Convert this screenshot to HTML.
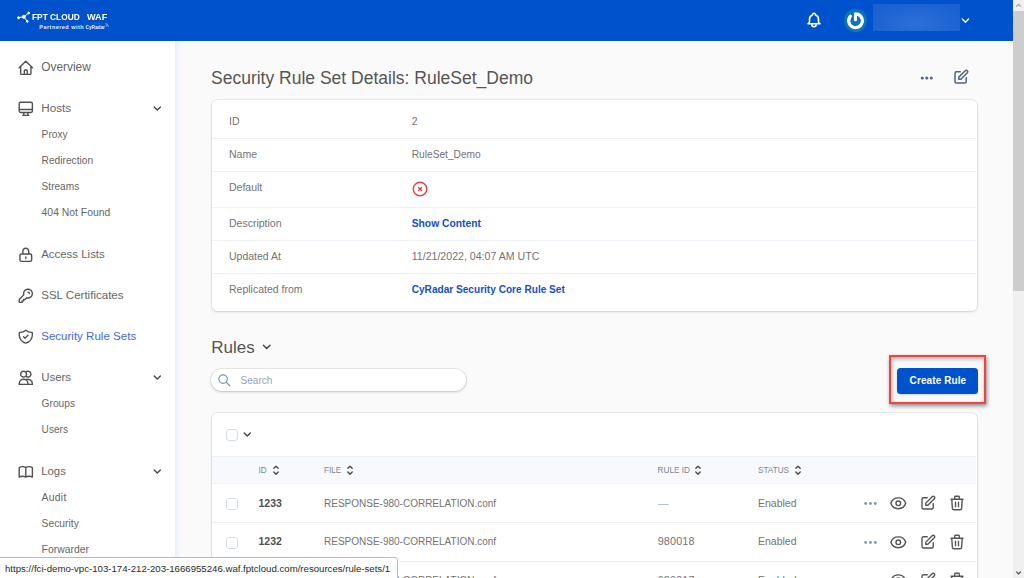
<!DOCTYPE html>
<html lang="en"><head><meta charset="utf-8"><title>Security Rule Set Details: RuleSet_Demo</title>
<style>
html,body{margin:0;padding:0}
body{width:1024px;height:578px;overflow:hidden;position:relative;background:#fafafa;font-family:"Liberation Sans", sans-serif}
.t{position:absolute;white-space:pre;line-height:normal}
.i,.b{position:absolute;display:block}
</style></head><body>
<div class="b" style="left:0px;top:0px;width:1013px;height:41px;background:#0052cc"></div>
<svg class="i" style="left:17px;top:11px" width="14" height="13" viewBox="0 0 14 13"><g stroke="#fff" stroke-width="1" fill="#fff"><path d="M1.6 6.7L6.8 5.8M6.8 5.8L11.7 2M6.8 5.8L10.3 10.3" fill="none"/><circle cx="1.6" cy="6.7" r="1.05"/><circle cx="6.8" cy="5.8" r="1.5"/><circle cx="11.7" cy="2" r="0.9"/><circle cx="10.3" cy="10.4" r="0.9"/></g></svg>
<span class="t" style="left:31.5px;top:11.00px;font-size:9.6px;color:#fff;font-weight:700;transform:scaleX(0.87);transform-origin:0 0">FPT CLOUD</span>
<span class="t" style="left:86.8px;top:11.00px;font-size:9.6px;color:#fff;font-weight:700;transform:scaleX(0.95);transform-origin:0 0">WAF</span>
<span class="t" style="left:39.3px;top:24.00px;font-size:5.5px;color:#e8eefc;font-weight:700;letter-spacing:0.47px">Partnered with</span>
<span class="t" style="left:85.6px;top:25.00px;font-size:4.7px;color:#e8eefc;font-weight:700;">CyRadar</span>
<svg class="i" style="left:104.5px;top:23px" width="4" height="5" viewBox="0 0 4 5" fill="none" stroke="#dfe8fb" stroke-width="0.6"><path d="M0.5 0.6A3 3 0 0 1 3.4 3.6M0.5 2A1.6 1.6 0 0 1 2 3.6"/></svg>
<svg class="i" style="left:805.2px;top:10.8px;" width="18" height="18" viewBox="0 0 24 24" fill="none" stroke="#fff" stroke-width="2.1" stroke-linecap="round" stroke-linejoin="round"><path d="M15 17h5l-1.405-1.405A2.032 2.032 0 0118 14.158V11a6.002 6.002 0 00-4-5.659V5a2 2 0 10-4 0v.341C7.67 6.165 6 8.388 6 11v3.159c0 .538-.214 1.055-.595 1.436L4 17h5m6 0v1a3 3 0 11-6 0v-1m6 0H9"/></svg>
<div class="b" style="left:843.8px;top:8.9px;width:23.1px;height:23.1px;border-radius:50%;background:#0d75b8"></div>
<svg class="i" style="left:843.8px;top:8.9px" width="23.1" height="23.1" viewBox="0 0 23.1 23.1" fill="none" stroke="#fff" stroke-width="3.1" stroke-linecap="round" stroke-linejoin="round"><path d="M11.5 10.8V4.9A6.85 6.85 0 1 1 6.5 7.1"/></svg>
<div class="b" style="left:873px;top:4.2px;width:87px;height:26.6px;background:radial-gradient(ellipse at 50% 75%,#2c70d8 0%,#1d63d2 70%,#195fd0 100%);filter:blur(0.7px)"></div>
<svg class="i" style="left:960.2px;top:15.2px;" width="10.8" height="10.8" viewBox="0 0 24 24" fill="none" stroke="#fff" stroke-width="3" stroke-linecap="round" stroke-linejoin="round"><path d="M19 9l-7 7-7-7"/></svg>
<div class="b" style="left:0px;top:41px;width:175px;height:537px;background:#fff"></div>
<div class="b" style="left:175px;top:41px;width:7px;height:537px;background:linear-gradient(90deg,#e7eefb 0%,#eff4fb 30%,#f6f8fb 60%,#fafafa 100%)"></div>
<svg class="i" style="left:17.4px;top:59.300000000000004px;" width="17.6" height="17.6" viewBox="0 0 24 24" fill="none" stroke="#505050" stroke-width="1.9" stroke-linecap="round" stroke-linejoin="round"><path d="M3 12l2-2m0 0l7-7 7 7M5 10v10a1 1 0 001 1h3m10-11l2 2m-2-2v10a1 1 0 01-1 1h-3m-6 0a1 1 0 001-1v-4a1 1 0 011-1h2a1 1 0 011 1v4a1 1 0 001 1m-6 0h6"/></svg>
<span class="t" style="left:41.2px;top:60.00px;font-size:11.9px;color:#666;font-weight:400;">Overview</span>
<svg class="i" style="left:17.4px;top:99.9px;" width="17.6" height="17.6" viewBox="0 0 24 24" fill="none" stroke="#505050" stroke-width="1.9" stroke-linecap="round" stroke-linejoin="round"><path d="M9.75 17L9 20l-1 1h8l-1-1-.75-3M3 13h18M5 17h14a2 2 0 002-2V5a2 2 0 00-2-2H5a2 2 0 00-2 2v10a2 2 0 002 2z"/></svg>
<span class="t" style="left:41.2px;top:101.00px;font-size:11.7px;color:#666;font-weight:400;">Hosts</span>
<svg class="i" style="left:152px;top:102.7px;" width="10.6" height="10.6" viewBox="0 0 24 24" fill="none" stroke="#444" stroke-width="3" stroke-linecap="round" stroke-linejoin="round"><path d="M19 9l-7 7-7-7"/></svg>
<span class="t" style="left:41.6px;top:129.00px;font-size:10.2px;color:#666;font-weight:400;">Proxy</span>
<span class="t" style="left:41.6px;top:155.00px;font-size:10.2px;color:#666;font-weight:400;">Redirection</span>
<span class="t" style="left:41.6px;top:181.00px;font-size:10.1px;color:#666;font-weight:400;">Streams</span>
<span class="t" style="left:41.6px;top:207.00px;font-size:10.4px;color:#666;font-weight:400;">404 Not Found</span>
<svg class="i" style="left:17.4px;top:245.9px;" width="17.6" height="17.6" viewBox="0 0 24 24" fill="none" stroke="#505050" stroke-width="1.9" stroke-linecap="round" stroke-linejoin="round"><path d="M12 15v2m-6 4h12a2 2 0 002-2v-6a2 2 0 00-2-2H6a2 2 0 00-2 2v6a2 2 0 002 2zm10-10V7a4 4 0 00-8 0v4h8z"/></svg>
<span class="t" style="left:41.2px;top:248.00px;font-size:11.45px;color:#666;font-weight:400;">Access Lists</span>
<svg class="i" style="left:17.4px;top:286.9px;" width="17.6" height="17.6" viewBox="0 0 24 24" fill="none" stroke="#505050" stroke-width="1.9" stroke-linecap="round" stroke-linejoin="round"><path d="M15 7a2 2 0 012 2m4 0a6 6 0 01-7.743 5.743L11 17H9v2H7v2H4a1 1 0 01-1-1v-2.586a1 1 0 01.293-.707l5.964-5.964A6 6 0 1121 9z"/></svg>
<span class="t" style="left:41.2px;top:289.00px;font-size:11.55px;color:#666;font-weight:400;">SSL Certificates</span>
<svg class="i" style="left:17.4px;top:327.9px;" width="17.6" height="17.6" viewBox="0 0 24 24" fill="none" stroke="#505050" stroke-width="1.9" stroke-linecap="round" stroke-linejoin="round"><path d="M9 12l2 2 4-4m5.618-4.016A11.955 11.955 0 0112 2.944a11.955 11.955 0 01-8.618 3.04A12.02 12.02 0 003 9c0 5.591 3.824 10.29 9 11.622 5.176-1.332 9-6.03 9-11.622 0-1.042-.133-2.052-.382-3.016z"/></svg>
<span class="t" style="left:41.2px;top:330.00px;font-size:11.56px;color:#4569da;font-weight:400;">Security Rule Sets</span>
<svg class="i" style="left:17.4px;top:368.9px;" width="17.6" height="17.6" viewBox="0 0 24 24" fill="none" stroke="#505050" stroke-width="1.9" stroke-linecap="round" stroke-linejoin="round"><path d="M12 4.354a4 4 0 110 5.292M15 21H3v-1a6 6 0 0112 0v1zm0 0h6v-1a6 6 0 00-9-5.197M13 7a4 4 0 11-8 0 4 4 0 018 0z"/></svg>
<span class="t" style="left:41.2px;top:371.00px;font-size:11.45px;color:#666;font-weight:400;">Users</span>
<svg class="i" style="left:152px;top:371.7px;" width="10.6" height="10.6" viewBox="0 0 24 24" fill="none" stroke="#444" stroke-width="3" stroke-linecap="round" stroke-linejoin="round"><path d="M19 9l-7 7-7-7"/></svg>
<span class="t" style="left:41.6px;top:398.00px;font-size:10.2px;color:#666;font-weight:400;">Groups</span>
<span class="t" style="left:41.6px;top:424.00px;font-size:10.1px;color:#666;font-weight:400;">Users</span>
<svg class="i" style="left:17.4px;top:462.9px;" width="17.6" height="17.6" viewBox="0 0 24 24" fill="none" stroke="#505050" stroke-width="1.9" stroke-linecap="round" stroke-linejoin="round"><path d="M12 6.253v13m0-13C10.832 5.477 9.246 5 7.5 5S4.168 5.477 3 6.253v13C4.168 18.477 5.754 18 7.5 18s3.332.477 4.5 1.253m0-13C13.168 5.477 14.754 5 16.5 5c1.747 0 3.332.477 4.5 1.253v13C19.832 18.477 18.247 18 16.5 18c-1.746 0-3.332.477-4.5 1.253"/></svg>
<span class="t" style="left:41.2px;top:465.00px;font-size:11.4px;color:#666;font-weight:400;">Logs</span>
<svg class="i" style="left:152px;top:465.7px;" width="10.6" height="10.6" viewBox="0 0 24 24" fill="none" stroke="#444" stroke-width="3" stroke-linecap="round" stroke-linejoin="round"><path d="M19 9l-7 7-7-7"/></svg>
<span class="t" style="left:41.6px;top:492.00px;font-size:10.4px;color:#666;font-weight:400;letter-spacing:0.25px">Audit</span>
<span class="t" style="left:41.6px;top:518.00px;font-size:10.3px;color:#666;font-weight:400;">Security</span>
<span class="t" style="left:41.6px;top:544.00px;font-size:10.4px;color:#666;font-weight:400;">Forwarder</span>
<span class="t" style="left:211px;top:68.00px;font-size:17.5px;color:#555;font-weight:400;">Security Rule Set Details: RuleSet_Demo</span>
<svg class="i" style="left:920px;top:74.6px" width="14" height="6" viewBox="0 0 14 6" fill="#56688a"><circle cx="2.3" cy="3" r="1.55"/><circle cx="6.8" cy="3" r="1.55"/><circle cx="11.3" cy="3" r="1.55"/></svg>
<svg class="i" style="left:951.5px;top:68.1px;" width="18" height="18" viewBox="0 0 24 24" fill="none" stroke="#53627d" stroke-width="2" stroke-linecap="round" stroke-linejoin="round"><path d="M11 5H6a2 2 0 00-2 2v11a2 2 0 002 2h11a2 2 0 002-2v-5m-1.414-9.414a2 2 0 112.828 2.828L11.828 15H9v-2.828l8.586-8.586z"/></svg>
<div class="b" style="left:211.7px;top:100.2px;width:765.3px;height:211.2px;background:#fff;border-radius:5.5px;box-shadow:0 0 0 1px rgba(0,0,0,0.055),0 1px 3px rgba(0,0,0,0.12)"></div>
<div class="b" style="left:212px;top:138px;width:764px;height:1px;background:#eef2f7"></div>
<div class="b" style="left:212px;top:171px;width:764px;height:1px;background:#eef2f7"></div>
<div class="b" style="left:212px;top:207px;width:764px;height:1px;background:#eef2f7"></div>
<div class="b" style="left:212px;top:240px;width:764px;height:1px;background:#eef2f7"></div>
<div class="b" style="left:212px;top:273px;width:764px;height:1px;background:#eef2f7"></div>
<span class="t" style="left:229px;top:115.00px;font-size:10.5px;color:#737373;font-weight:400;">ID</span>
<span class="t" style="left:411.7px;top:115.00px;font-size:10.5px;color:#737373;font-weight:400;">2</span>
<span class="t" style="left:229px;top:148.00px;font-size:10.5px;color:#737373;font-weight:400;">Name</span>
<span class="t" style="left:411.7px;top:149.00px;font-size:10.2px;color:#737373;font-weight:400;">RuleSet_Demo</span>
<span class="t" style="left:229px;top:181.00px;font-size:10.5px;color:#737373;font-weight:400;">Default</span>
<svg class="i" style="left:411.1px;top:180.2px;" width="18.1" height="18.1" viewBox="0 0 24 24" fill="none" stroke="#e63d44" stroke-width="1.85" stroke-linecap="round" stroke-linejoin="round"><path d="M10 14l2-2m0 0l2-2m-2 2l-2-2m2 2l2 2m7-2a9 9 0 11-18 0 9 9 0 0118 0z"/></svg>
<span class="t" style="left:229px;top:217.00px;font-size:10.5px;color:#737373;font-weight:400;">Description</span>
<span class="t" style="left:411.7px;top:218.00px;font-size:10.3px;color:#1350cf;font-weight:700;">Show Content</span>
<span class="t" style="left:229px;top:250.00px;font-size:10.5px;color:#737373;font-weight:400;">Updated At</span>
<span class="t" style="left:411.7px;top:250.00px;font-size:10.6px;color:#737373;font-weight:400;">11/21/2022, 04:07 AM UTC</span>
<span class="t" style="left:229px;top:283.00px;font-size:10.5px;color:#737373;font-weight:400;">Replicated from</span>
<span class="t" style="left:411.7px;top:284.00px;font-size:10.1px;color:#1350cf;font-weight:700;">CyRadar Security Core Rule Set</span>
<span class="t" style="left:211.2px;top:338.00px;font-size:17px;color:#555;font-weight:400;">Rules</span>
<svg class="i" style="left:261.3px;top:341px;" width="11.4" height="11.4" viewBox="0 0 24 24" fill="none" stroke="#444" stroke-width="3" stroke-linecap="round" stroke-linejoin="round"><path d="M19 9l-7 7-7-7"/></svg>
<div class="b" style="left:211.4px;top:368.6px;width:254.8px;height:22.6px;background:#fff;border-radius:12px;box-shadow:0 0 0 1px rgba(0,0,0,0.06),0 1px 3px rgba(0,0,0,0.18)"></div>
<svg class="i" style="left:216.8px;top:372.8px;" width="14.6" height="14.6" viewBox="0 0 24 24" fill="none" stroke="#7b90b2" stroke-width="2" stroke-linecap="round" stroke-linejoin="round"><path d="M21 21l-6-6m2-5a7 7 0 11-14 0 7 7 0 0114 0z"/></svg>
<span class="t" style="left:240.6px;top:375.00px;font-size:10px;color:#93a2bd;font-weight:400;">Search</span>
<div class="b" style="left:897px;top:368px;width:81px;height:26.3px;background:#0052cc;border-radius:3.5px;box-shadow:0 1px 2px rgba(0,0,0,0.15)"></div>
<span class="t" style="left:909.6px;top:375.00px;font-size:10px;color:#fff;font-weight:700;letter-spacing:0.1px">Create Rule</span>
<div class="b" style="left:889px;top:355px;width:93px;height:45px;border:2px solid #f04343;box-shadow:1px 2px 4px rgba(0,0,0,0.45), inset 1px 2px 4px rgba(0,0,0,0.3)"></div>
<div class="b" style="left:211.7px;top:413.2px;width:765.3px;height:200px;background:#fff;border-radius:5.5px;box-shadow:0 0 0 1px rgba(0,0,0,0.055),0 1px 3px rgba(0,0,0,0.12)"></div>
<div class="b" style="left:226px;top:428.7px;width:12px;height:12px;background:#fff;border:1px solid #d4deea;border-radius:3px;box-sizing:border-box"></div>
<svg class="i" style="left:242px;top:429px;" width="10.5" height="10.5" viewBox="0 0 24 24" fill="none" stroke="#444" stroke-width="3.2" stroke-linecap="round" stroke-linejoin="round"><path d="M19 9l-7 7-7-7"/></svg>
<div class="b" style="left:212px;top:456px;width:764px;height:28px;background:#f7f9fc;border-top:1px solid #ebf0f6;border-bottom:1px solid #eef2f7;box-sizing:border-box"></div>
<span class="t" style="left:258.5px;top:466.00px;font-size:8.2px;color:#7a8596;font-weight:400;">ID</span>
<svg class="i" style="left:269.4px;top:463.2px;" width="14" height="14" viewBox="0 0 24 24" fill="none" stroke="#4a4a4a" stroke-width="2.4" stroke-linecap="round" stroke-linejoin="round"><path d="M8.3 9.2l3.7-3.7 3.7 3.7m0 6.2l-3.7 3.7-3.7-3.7"/></svg>
<span class="t" style="left:324px;top:466.00px;font-size:8.2px;color:#7a8596;font-weight:400;">FILE</span>
<svg class="i" style="left:342.59999999999997px;top:463.2px;" width="14" height="14" viewBox="0 0 24 24" fill="none" stroke="#4a4a4a" stroke-width="2.4" stroke-linecap="round" stroke-linejoin="round"><path d="M8.3 9.2l3.7-3.7 3.7 3.7m0 6.2l-3.7 3.7-3.7-3.7"/></svg>
<span class="t" style="left:657.6px;top:466.00px;font-size:8.2px;color:#7a8596;font-weight:400;">RULE ID</span>
<svg class="i" style="left:691.3px;top:463.2px;" width="14" height="14" viewBox="0 0 24 24" fill="none" stroke="#4a4a4a" stroke-width="2.4" stroke-linecap="round" stroke-linejoin="round"><path d="M8.3 9.2l3.7-3.7 3.7 3.7m0 6.2l-3.7 3.7-3.7-3.7"/></svg>
<span class="t" style="left:758px;top:466.00px;font-size:8.2px;color:#7a8596;font-weight:400;">STATUS</span>
<svg class="i" style="left:791.1999999999999px;top:463.2px;" width="14" height="14" viewBox="0 0 24 24" fill="none" stroke="#4a4a4a" stroke-width="2.4" stroke-linecap="round" stroke-linejoin="round"><path d="M8.3 9.2l3.7-3.7 3.7 3.7m0 6.2l-3.7 3.7-3.7-3.7"/></svg>
<div class="b" style="left:226px;top:498.0px;width:12px;height:12px;background:#fff;border:1px solid #d4deea;border-radius:3px;box-sizing:border-box"></div>
<span class="t" style="left:258.5px;top:497.00px;font-size:10.5px;color:#4f4f4f;font-weight:700;">1233</span>
<span class="t" style="left:324px;top:498.00px;font-size:10px;color:#737373;font-weight:400;">RESPONSE-980-CORRELATION.conf</span>
<span class="t" style="left:657.7px;top:497.00px;font-size:10.8px;color:#a8b2c0;font-weight:400;letter-spacing:0.15px">—</span>
<span class="t" style="left:758px;top:497.00px;font-size:10.5px;color:#737373;font-weight:400;">Enabled</span>
<svg class="i" style="left:864px;top:500.9px" width="13" height="5" viewBox="0 0 13 5" fill="#7d98b8"><circle cx="1.7" cy="2.5" r="1.45"/><circle cx="6.5" cy="2.5" r="1.45"/><circle cx="11.3" cy="2.5" r="1.45"/></svg>
<svg class="i" style="left:889px;top:493.8px;" width="18.6" height="18.6" viewBox="0 0 24 24" fill="none" stroke="#555" stroke-width="1.85" stroke-linecap="round" stroke-linejoin="round"><path d="M15 12a3 3 0 11-6 0 3 3 0 016 0z M2.458 12C3.732 7.943 7.523 5 12 5c4.478 0 8.268 2.943 9.542 7-1.274 4.057-5.064 7-9.542 7-4.477 0-8.268-2.943-9.542-7z"/></svg>
<svg class="i" style="left:918.5px;top:494.0px;" width="18" height="18" viewBox="0 0 24 24" fill="none" stroke="#555" stroke-width="1.85" stroke-linecap="round" stroke-linejoin="round"><path d="M11 5H6a2 2 0 00-2 2v11a2 2 0 002 2h11a2 2 0 002-2v-5m-1.414-9.414a2 2 0 112.828 2.828L11.828 15H9v-2.828l8.586-8.586z"/></svg>
<svg class="i" style="left:947.6px;top:493.8px;" width="18" height="18" viewBox="0 0 24 24" fill="none" stroke="#555" stroke-width="1.85" stroke-linecap="round" stroke-linejoin="round"><path d="M19 7l-.867 12.142A2 2 0 0116.138 21H7.862a2 2 0 01-1.995-1.858L5 7m5 4v6m4-6v6m1-10V4a1 1 0 00-1-1h-4a1 1 0 00-1 1v3M4 7h16"/></svg>
<div class="b" style="left:212px;top:522px;width:764px;height:1px;background:#eef2f7"></div>
<div class="b" style="left:226px;top:536.7px;width:12px;height:12px;background:#fff;border:1px solid #d4deea;border-radius:3px;box-sizing:border-box"></div>
<span class="t" style="left:258.5px;top:535.00px;font-size:10.5px;color:#4f4f4f;font-weight:700;">1232</span>
<span class="t" style="left:324px;top:536.00px;font-size:10px;color:#737373;font-weight:400;">RESPONSE-980-CORRELATION.conf</span>
<span class="t" style="left:657.7px;top:535.00px;font-size:10.8px;color:#737373;font-weight:400;letter-spacing:0.15px">980018</span>
<span class="t" style="left:758px;top:535.00px;font-size:10.5px;color:#737373;font-weight:400;">Enabled</span>
<svg class="i" style="left:864px;top:539.6px" width="13" height="5" viewBox="0 0 13 5" fill="#7d98b8"><circle cx="1.7" cy="2.5" r="1.45"/><circle cx="6.5" cy="2.5" r="1.45"/><circle cx="11.3" cy="2.5" r="1.45"/></svg>
<svg class="i" style="left:889px;top:532.5px;" width="18.6" height="18.6" viewBox="0 0 24 24" fill="none" stroke="#555" stroke-width="1.85" stroke-linecap="round" stroke-linejoin="round"><path d="M15 12a3 3 0 11-6 0 3 3 0 016 0z M2.458 12C3.732 7.943 7.523 5 12 5c4.478 0 8.268 2.943 9.542 7-1.274 4.057-5.064 7-9.542 7-4.477 0-8.268-2.943-9.542-7z"/></svg>
<svg class="i" style="left:918.5px;top:532.7px;" width="18" height="18" viewBox="0 0 24 24" fill="none" stroke="#555" stroke-width="1.85" stroke-linecap="round" stroke-linejoin="round"><path d="M11 5H6a2 2 0 00-2 2v11a2 2 0 002 2h11a2 2 0 002-2v-5m-1.414-9.414a2 2 0 112.828 2.828L11.828 15H9v-2.828l8.586-8.586z"/></svg>
<svg class="i" style="left:947.6px;top:532.5px;" width="18" height="18" viewBox="0 0 24 24" fill="none" stroke="#555" stroke-width="1.85" stroke-linecap="round" stroke-linejoin="round"><path d="M19 7l-.867 12.142A2 2 0 0116.138 21H7.862a2 2 0 01-1.995-1.858L5 7m5 4v6m4-6v6m1-10V4a1 1 0 00-1-1h-4a1 1 0 00-1 1v3M4 7h16"/></svg>
<div class="b" style="left:212px;top:561px;width:764px;height:1px;background:#eef2f7"></div>
<div class="b" style="left:226px;top:575.4px;width:12px;height:12px;background:#fff;border:1px solid #d4deea;border-radius:3px;box-sizing:border-box"></div>
<span class="t" style="left:258.5px;top:574.00px;font-size:10.5px;color:#4f4f4f;font-weight:700;">1231</span>
<span class="t" style="left:324px;top:575.00px;font-size:10px;color:#737373;font-weight:400;">RESPONSE-980-CORRELATION.conf</span>
<span class="t" style="left:657.7px;top:574.00px;font-size:10.8px;color:#737373;font-weight:400;letter-spacing:0.15px">980017</span>
<span class="t" style="left:758px;top:574.00px;font-size:10.5px;color:#737373;font-weight:400;">Enabled</span>
<svg class="i" style="left:864px;top:578.3px" width="13" height="5" viewBox="0 0 13 5" fill="#7d98b8"><circle cx="1.7" cy="2.5" r="1.45"/><circle cx="6.5" cy="2.5" r="1.45"/><circle cx="11.3" cy="2.5" r="1.45"/></svg>
<svg class="i" style="left:889px;top:571.2px;" width="18.6" height="18.6" viewBox="0 0 24 24" fill="none" stroke="#555" stroke-width="1.85" stroke-linecap="round" stroke-linejoin="round"><path d="M15 12a3 3 0 11-6 0 3 3 0 016 0z M2.458 12C3.732 7.943 7.523 5 12 5c4.478 0 8.268 2.943 9.542 7-1.274 4.057-5.064 7-9.542 7-4.477 0-8.268-2.943-9.542-7z"/></svg>
<svg class="i" style="left:918.5px;top:571.4px;" width="18" height="18" viewBox="0 0 24 24" fill="none" stroke="#555" stroke-width="1.85" stroke-linecap="round" stroke-linejoin="round"><path d="M11 5H6a2 2 0 00-2 2v11a2 2 0 002 2h11a2 2 0 002-2v-5m-1.414-9.414a2 2 0 112.828 2.828L11.828 15H9v-2.828l8.586-8.586z"/></svg>
<svg class="i" style="left:947.6px;top:571.2px;" width="18" height="18" viewBox="0 0 24 24" fill="none" stroke="#555" stroke-width="1.85" stroke-linecap="round" stroke-linejoin="round"><path d="M19 7l-.867 12.142A2 2 0 0116.138 21H7.862a2 2 0 01-1.995-1.858L5 7m5 4v6m4-6v6m1-10V4a1 1 0 00-1-1h-4a1 1 0 00-1 1v3M4 7h16"/></svg>
<div class="b" style="left:-1px;top:557px;width:398.5px;height:22px;background:#fff;border:1px solid #b9b9b9;border-top-right-radius:3px;box-sizing:border-box"></div>
<span class="t" style="left:5px;top:563.00px;font-size:9.65px;color:#2a2a2a;font-weight:400;">https://fci-demo-vpc-103-174-212-203-1666955246.waf.fptcloud.com/resources/rule-sets/1</span>
<div class="b" style="left:1013px;top:0px;width:11px;height:578px;background:#f0f0f0"></div>
<div class="b" style="left:1013px;top:11px;width:11px;height:279.5px;background:#cdcdcd"></div>
<svg class="i" style="left:1013px;top:0" width="11" height="11" viewBox="0 0 11 11" fill="none" stroke="#a3a3a3" stroke-width="1.3"><path d="M3.3 6.6L5.6 4.3L7.9 6.6"/></svg>
<svg class="i" style="left:1013px;top:567px" width="11" height="11" viewBox="0 0 11 11" fill="none" stroke="#505050" stroke-width="1.3"><path d="M3.3 4.6L5.6 6.9L7.9 4.6"/></svg>
</body></html>
